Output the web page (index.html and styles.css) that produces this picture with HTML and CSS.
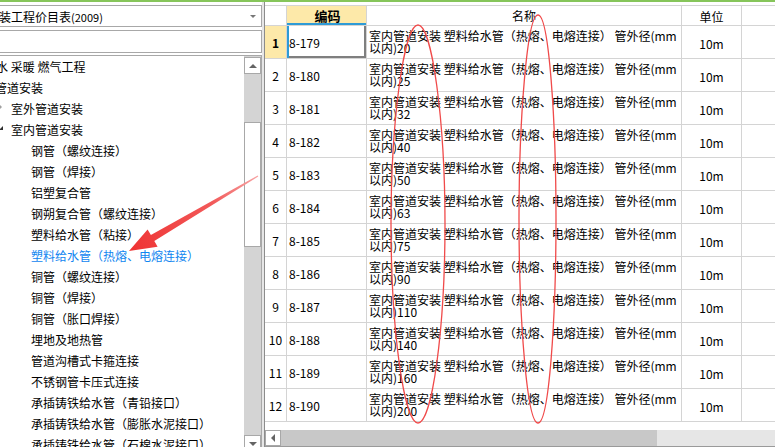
FILE: index.html
```html
<!DOCTYPE html>
<html lang="zh-CN">
<head>
<meta charset="utf-8">
<title>定额查询</title>
<link rel="stylesheet" href="styles.css">
</head>
<body>
<div class="app">
  <aside class="side">
    <div class="combo"><span class="combo-text">装工程价目表<span class="yr">(2009)</span></span><span class="combo-arrow"></span></div>
    <div class="search"></div>
    <div class="tree">
      <ul class="tree-list">
        <li class="node lvl0 cut1">水 采暖 燃气工程</li>
        <li class="node lvl0 cut2">管道安装</li>
        <li class="node lvl1"><span class="tog collapsed"></span>室外管道安装</li>
        <li class="node lvl1"><span class="tog expanded"></span>室内管道安装</li>
        <li class="node lvl2">钢管（螺纹连接）</li>
        <li class="node lvl2">钢管（焊接）</li>
        <li class="node lvl2">铝塑复合管</li>
        <li class="node lvl2">钢朔复合管（螺纹连接）</li>
        <li class="node lvl2">塑料给水管（粘接）</li>
        <li class="node lvl2 current">塑料给水管（热熔、电熔连接）</li>
        <li class="node lvl2">铜管（螺纹连接）</li>
        <li class="node lvl2">铜管（焊接）</li>
        <li class="node lvl2">铜管（胀口焊接）</li>
        <li class="node lvl2">埋地及地热管</li>
        <li class="node lvl2">管道沟槽式卡箍连接</li>
        <li class="node lvl2">不锈钢管卡压式连接</li>
        <li class="node lvl2">承插铸铁给水管（青铅接口）</li>
        <li class="node lvl2">承插铸铁给水管（膨胀水泥接口）</li>
        <li class="node lvl2">承插铸铁给水管（石棉水泥接口）</li>
      </ul>
      <div class="vscroll">
        <div class="sbtn up"><span class="tri-up"></span></div>
        <div class="vtrack"><div class="vthumb"></div></div>
        <div class="sbtn down"><span class="tri-down"></span></div>
      </div>
    </div>
  </aside>
  <div class="splitter"></div>
  <main class="gridpanel">
    <div class="grid">
      <div class="row head">
        <div class="cell num"></div>
        <div class="cell code hl">编码</div>
        <div class="cell name-h">名称</div>
        <div class="cell unit">单位</div>
        <div class="cell extra"></div>
      </div>
      <div class="row"><div class="cell num hl">1</div><div class="cell code sel">8-179</div><div class="cell name">室内管道安装 塑料给水管（热熔、电熔连接） 管外径(mm以内)20</div><div class="cell unit">10m</div><div class="cell extra"></div></div>
      <div class="row"><div class="cell num">2</div><div class="cell code">8-180</div><div class="cell name">室内管道安装 塑料给水管（热熔、电熔连接） 管外径(mm以内)25</div><div class="cell unit">10m</div><div class="cell extra"></div></div>
      <div class="row"><div class="cell num">3</div><div class="cell code">8-181</div><div class="cell name">室内管道安装 塑料给水管（热熔、电熔连接） 管外径(mm以内)32</div><div class="cell unit">10m</div><div class="cell extra"></div></div>
      <div class="row"><div class="cell num">4</div><div class="cell code">8-182</div><div class="cell name">室内管道安装 塑料给水管（热熔、电熔连接） 管外径(mm以内)40</div><div class="cell unit">10m</div><div class="cell extra"></div></div>
      <div class="row"><div class="cell num">5</div><div class="cell code">8-183</div><div class="cell name">室内管道安装 塑料给水管（热熔、电熔连接） 管外径(mm以内)50</div><div class="cell unit">10m</div><div class="cell extra"></div></div>
      <div class="row"><div class="cell num">6</div><div class="cell code">8-184</div><div class="cell name">室内管道安装 塑料给水管（热熔、电熔连接） 管外径(mm以内)63</div><div class="cell unit">10m</div><div class="cell extra"></div></div>
      <div class="row"><div class="cell num">7</div><div class="cell code">8-185</div><div class="cell name">室内管道安装 塑料给水管（热熔、电熔连接） 管外径(mm以内)75</div><div class="cell unit">10m</div><div class="cell extra"></div></div>
      <div class="row"><div class="cell num">8</div><div class="cell code">8-186</div><div class="cell name">室内管道安装 塑料给水管（热熔、电熔连接） 管外径(mm以内)90</div><div class="cell unit">10m</div><div class="cell extra"></div></div>
      <div class="row"><div class="cell num">9</div><div class="cell code">8-187</div><div class="cell name">室内管道安装 塑料给水管（热熔、电熔连接） 管外径(mm以内)110</div><div class="cell unit">10m</div><div class="cell extra"></div></div>
      <div class="row"><div class="cell num">10</div><div class="cell code">8-188</div><div class="cell name">室内管道安装 塑料给水管（热熔、电熔连接） 管外径(mm以内)140</div><div class="cell unit">10m</div><div class="cell extra"></div></div>
      <div class="row"><div class="cell num">11</div><div class="cell code">8-189</div><div class="cell name">室内管道安装 塑料给水管（热熔、电熔连接） 管外径(mm以内)160</div><div class="cell unit">10m</div><div class="cell extra"></div></div>
      <div class="row"><div class="cell num">12</div><div class="cell code">8-190</div><div class="cell name">室内管道安装 塑料给水管（热熔、电熔连接） 管外径(mm以内)200</div><div class="cell unit">10m</div><div class="cell extra"></div></div>
    </div>
    <div class="hscroll">
      <div class="hbtn"><span class="tri-left"></span></div>
      <div class="hthumb"></div>
      <div class="htrack"></div>
    </div>
  </main>
</div>
<svg class="marks" width="775" height="447" viewBox="0 0 775 447">
  <defs>
    <linearGradient id="arrowGrad" x1="258" y1="176" x2="130" y2="251" gradientUnits="userSpaceOnUse">
      <stop offset="0" stop-color="#f7a3a3"/>
      <stop offset="0.35" stop-color="#f25a5a"/>
      <stop offset="1" stop-color="#ef3333"/>
    </linearGradient>
  </defs>
  <path class="loop" d="M418,25 C432,25 445,120 445,224 C445,330 432,423 418,423 C404,423 391,330 391,224 C391,120 404,25 418,25 Z"/>
  <path class="loop" d="M538,15 C549,15 556,120 556,219 C556,320 549,423 538,423 C527,423 519,320 519,219 C519,120 527,15 538,15 Z"/>
  <polygon fill="url(#arrowGrad)" points="129,251 157.6,246.8 154.3,241.1 258.3,176.6 257.7,175.4 150.9,235.1 147.6,229.4"/>
</svg>
</body>
</html>
```

FILE: styles.css
```css
* {
  box-sizing: border-box;
  margin: 0;
  padding: 0;
}

html, body {
  width: 775px;
  height: 447px;
  overflow: hidden;
}

body {
  font-family: "Noto Sans CJK SC", "Liberation Sans", sans-serif;
  font-size: 12px;
  color: #000;
  background: #fff;
  border-top: 2px solid #86c55a;
}

.app {
  display: flex;
  height: 445px;
}

/* ---------- left panel ---------- */
.side {
  width: 262px;
  flex: none;
  display: flex;
  flex-direction: column;
  background: #fff;
}

.combo {
  margin-top: 3px;
  height: 22px;
  border: 1px solid #a8a8a8;
  border-left: none;
  display: flex;
  align-items: center;
  justify-content: space-between;
  padding-right: 5px;
  flex: none;
}

.combo-text {
  margin-left: -1px;
  white-space: nowrap;
}

.yr {
  font-size: 11px;
}

.combo-arrow {
  width: 0;
  height: 0;
  border-left: 3px solid transparent;
  border-right: 3px solid transparent;
  border-top: 3px solid #777;
}

.search {
  margin-top: 3px;
  height: 23px;
  border: 1px solid #a8a8a8;
  border-left: none;
  flex: none;
}

.tree {
  margin-top: 2px;
  height: 397px;
  flex: none;
  border-top: 1px solid #a8a8a8;
  border-right: 1px solid #a8a8a8;
  display: flex;
}

.tree-list {
  list-style: none;
  flex: 1;
  overflow: hidden;
}

.node {
  height: 21px;
  line-height: 21px;
  white-space: nowrap;
  display: flex;
  align-items: center;
}

.cut1 { margin-left: -4px; }
.cut2 { margin-left: -5px; }

.lvl1 { padding-left: 0; }
.lvl2 { padding-left: 31px; }

.current { color: #1086f0; }

.tog {
  width: 11px;
  height: 21px;
  flex: none;
  position: relative;
}

.tog.collapsed::before {
  content: "";
  position: absolute;
  left: -1px;
  top: 6px;
  border-left: 3px solid #a0a0a0;
  border-top: 3px solid transparent;
  border-bottom: 3px solid transparent;
}

.tog.expanded::before {
  content: "";
  position: absolute;
  left: -1px;
  top: 7px;
  border-bottom: 4px solid #303030;
  border-left: 4px solid transparent;
}

.vscroll {
  width: 17px;
  flex: none;
  display: flex;
  flex-direction: column;
  background: #d4d4d4;
}

.sbtn {
  height: 17px;
  flex: none;
  background: #fff;
  border: 1px solid #a8a8a8;
  display: flex;
  align-items: center;
  justify-content: center;
}

.sbtn.up { margin-top: 1px; }

.tri-up {
  border-left: 4px solid transparent;
  border-right: 4px solid transparent;
  border-bottom: 4px solid #646464;
}

.tri-down {
  border-left: 4px solid transparent;
  border-right: 4px solid transparent;
  border-top: 4px solid #646464;
}

.vtrack {
  height: 361px;
  flex: none;
}

.vthumb {
  margin-top: 48px;
  height: 125px;
  background: #fff;
  border: 1px solid #a8a8a8;
}

.splitter {
  width: 2px;
  flex: none;
  background: #e6e6e6;
}

/* ---------- grid panel ---------- */
.gridpanel {
  flex: 1;
  min-width: 0;
  display: flex;
  flex-direction: column;
  background: #fff;
  border-left: 1px solid #8c8c8c;
  padding-top: 3px;
}

.grid {
  flex: 1;
  border-top: 1px solid #d4d4d4;
  overflow: hidden;
}

.row {
  display: grid;
  grid-template-columns: 22px 80px 315px 60px 1fr;
  height: 33px;
  border-bottom: 1px solid #d4d4d4;
}

.row.head {
  height: 20px;
}

.cell {
  border-right: 1px solid #d4d4d4;
  display: flex;
  align-items: center;
  white-space: nowrap;
}

.head .cell {
  justify-content: center;
}

.num {
  justify-content: center;
}

.hl {
  background: #fde9a9;
  font-weight: bold;
}

.head .code {
  box-shadow: inset 0 -2px #2e9bd6;
  font-size: 13px;
}

.name-h {
  padding-left: 0;
}

.code {
  padding-left: 2px;
}

.sel {
  box-shadow: inset 2px 0 #2e9bd6, inset -2px -2px #7f7f7f;
}

.name {
  display: block;
  white-space: normal;
  line-height: 12px;
  padding: 4px 2px 0 2px;
  overflow: hidden;
}

.unit {
  justify-content: center;
  padding-top: 2px;
}

.extra {
  border-right: none;
}

.hscroll {
  height: 17px;
  flex: none;
  display: flex;
  background: #e6e6e6;
  border-bottom: 1px solid #9a9a9a;
}

.hbtn {
  width: 16px;
  flex: none;
  background: #fff;
  border: 1px solid #a8a8a8;
  display: flex;
  align-items: center;
  justify-content: center;
}

.tri-left {
  border-top: 4px solid transparent;
  border-bottom: 4px solid transparent;
  border-right: 4px solid #646464;
}

.hthumb {
  width: 376px;
  flex: none;
  background: #c8c8c8;
}

.htrack {
  flex: 1;
}

/* ---------- annotations ---------- */
.marks {
  position: fixed;
  left: 0;
  top: 0;
  pointer-events: none;
}

.loop {
  fill: none;
  stroke: #f04a4a;
  stroke-width: 1.3;
}
```
